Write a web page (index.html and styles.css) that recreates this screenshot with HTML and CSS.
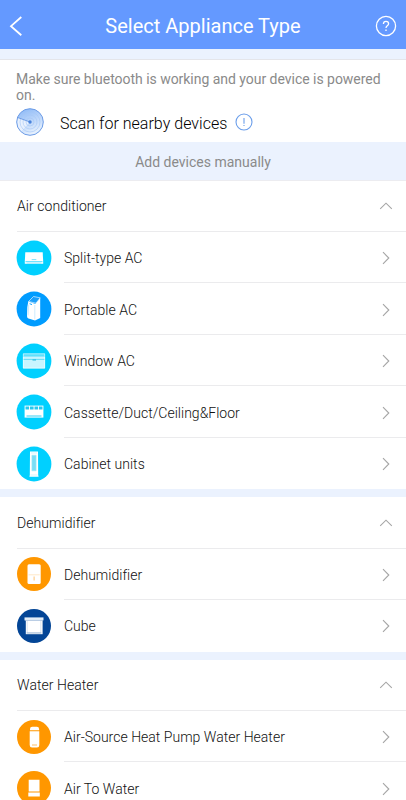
FILE: index.html
```html
<!DOCTYPE html>
<html lang="en">
<head>
  <meta charset="UTF-8" />
  <meta name="viewport" content="width=device-width, initial-scale=1" />
  <title>Select Appliance Type</title>
  <link rel="stylesheet" href="styles.css">
</head>
<body>

  <svg class="defs" width="0" height="0">
    <symbol id="up" viewBox="0 0 14 8"><path d="M1.2 6.8 7 1.2l5.8 5.6" /></symbol>
    <symbol id="right" viewBox="0 0 8 14"><path d="M1 1.2 6.8 7 1 12.8" /></symbol>
  </svg>

  <header class="topbar">
    <svg class="back" width="14" height="20" viewBox="0 0 14 20"><path d="M12.3 1 2 10.2 12.3 19.2" /></svg>
    <h1>Select Appliance Type</h1>
    <svg class="help" width="22" height="22" viewBox="0 0 22 22">
      <circle cx="11" cy="11" r="9.6" />
      <path d="M8.4 9c0-1.7 1.1-2.7 2.6-2.7s2.6 1 2.6 2.5c0 1.9-2.6 2.1-2.6 4.1M11 14.6v1.4" />
    </svg>
  </header>

  <section class="scan">
    <p class="hint">Make sure bluetooth is working and your device is powered on.</p>
    <div class="scan-row">
      <svg class="radar" width="28" height="28" viewBox="0 0 28 28">
        <defs>
          <linearGradient id="sweep" x1="0" y1="0" x2="0.4" y2="1">
            <stop offset="0" stop-color="#86b5f6" />
            <stop offset="1" stop-color="#e4effd" />
          </linearGradient>
        </defs>
        <circle cx="14" cy="14" r="13.2" fill="url(#sweep)" />
        <path d="M14 14 1.6 9.5A13.2 13.2 0 0 0 5 23.7z" fill="#e8f1fe" />
        <g fill="none" stroke="#a5c6f5" stroke-width=".6">
          <circle cx="14" cy="14" r="4" />
          <circle cx="14" cy="14" r="7" />
          <circle cx="14" cy="14" r="10" />
        </g>
        <circle cx="14" cy="14" r="13.3" fill="none" stroke="#6b9be6" />
        <path d="M14 14 1.6 9.5" stroke="#5c8fe0" stroke-width=".8" />
        <circle cx="14" cy="14" r="1.7" fill="#4a83dc" />
      </svg>
      <span class="scan-label">Scan for nearby devices</span>
      <svg class="info" width="18" height="18" viewBox="0 0 18 18">
        <circle cx="9" cy="9" r="8" />
        <path d="M9 5v5.8M9 11.9v1.2" />
      </svg>
    </div>
  </section>

  <div class="manual">Add devices manually</div>

  <section class="group">
    <div class="group-head"><h2>Air conditioner</h2><svg class="arrow" width="14" height="8"><use href="#up" /></svg></div>
    <div class="item">
      <svg class="icon" width="36" height="36" viewBox="0 0 36 36">
        <circle cx="18" cy="18" r="17.4" fill="#00d0ff" />
        <path d="M9.3 12.3h17.4l.5 9.4v2H8.800v-2z" fill="#fff" />
        <path d="M9.5 21.7h17" stroke="#00d0ff" stroke-width=".7" />
        <path d="M15.7 19.6h4.6" stroke="#5bdcf8" stroke-width=".8" />
        <path d="M11 23.2h14" stroke="#9beafb" stroke-width=".8" />
      </svg>
      <div class="item-body"><span>Split-type AC</span><svg class="arrow" width="8" height="14"><use href="#right" /></svg></div>
    </div>
    <div class="item">
      <svg class="icon" width="36" height="36" viewBox="0 0 36 36">
        <circle cx="18" cy="18" r="17.4" fill="#009cff" />
        <path d="m12.5 10.5 5-5 6.7 1.3-4.2 5.4z" fill="#1b9ffa" stroke="#fff" stroke-width=".6" />
        <path d="m12.3 10.6 7.1 2.5 4.8-6v19.8l-5.2 2.6-6.5-2.1q-1.5-.5-1.5-2.500l.3-9z" fill="#fff" />
        <path d="M18.8 14v14.5M12.7 13.5l-.6 11" fill="none" stroke="#addcfc" stroke-width=".6" />
        <path d="m13.6 12.7 2.4.9" stroke="#009cff" stroke-width=".9" />
      </svg>
      <div class="item-body"><span>Portable AC</span><svg class="arrow" width="8" height="14"><use href="#right" /></svg></div>
    </div>
    <div class="item">
      <svg class="icon" width="36" height="36" viewBox="0 0 36 36">
        <circle cx="18" cy="18" r="17.4" fill="#00d0ff" />
        <path d="M7 10.6h22v14.8H7z" fill="#c9f5ff" />
        <path d="M7.3 10.9h21.4v3H7.3z" fill="#5fe0fc" stroke="#c9f5ff" stroke-width=".6" />
        <path d="M7 16.4h22" stroke="#38d4f5" stroke-width=".7" />
        <path d="M16.5 17H20" stroke="#00a9d6" stroke-width=".8" />
        <path d="M7.3 14v11.1h21.4V14" fill="none" stroke="#fff" stroke-width=".6" />
      </svg>
      <div class="item-body"><span>Window AC</span><svg class="arrow" width="8" height="14"><use href="#right" /></svg></div>
    </div>
    <div class="item">
      <svg class="icon" width="36" height="36" viewBox="0 0 36 36">
        <circle cx="18" cy="18" r="17.4" fill="#00d0ff" />
        <path d="M8.6 11.6h18.8v12H8.6z" fill="#fff" />
        <path d="M9.5 12.6h3.6v2.8H9.5zM14 12.6h3.6v2.8H14zM18.5 12.6h3.6v2.8h-3.6zM23 12.6h3.5v2.8H23z" fill="#25c9ef" />
        <path d="M10.5 22h15" stroke="#00c4f2" stroke-width=".8" />
      </svg>
      <div class="item-body"><span>Cassette/Duct/Ceiling&amp;Floor</span><svg class="arrow" width="8" height="14"><use href="#right" /></svg></div>
    </div>
    <div class="item">
      <svg class="icon" width="36" height="36" viewBox="0 0 36 36">
        <circle cx="18" cy="18" r="17.4" fill="#00d0ff" />
        <path d="M14 5.6h8l.2 23.4.4 1.800h-9.200l.4-1.800z" fill="#fff" />
        <path d="M15.900 9.200h4.200v15.600h-4.200z" fill="#79def5" stroke="#a0e9f8" stroke-width=".6" />
        <path d="M15 7h6M14.5 29h7" stroke="#b5f0fc" stroke-width=".6" />
      </svg>
      <div class="item-body"><span>Cabinet units</span><svg class="arrow" width="8" height="14"><use href="#right" /></svg></div>
    </div>
  </section>

  <section class="group">
    <div class="group-head"><h2>Dehumidifier</h2><svg class="arrow" width="14" height="8"><use href="#up" /></svg></div>
    <div class="item">
      <svg class="icon" width="36" height="36" viewBox="0 0 36 36">
        <circle cx="18" cy="18" r="17" fill="#ff9700" />
        <rect x="11.5" y="8.2" width="13.2" height="19.8" rx="1.5" fill="#fff" />
        <path d="M12.5 18.8h11.2" stroke="#ffdfb0" stroke-width=".7" />
        <path d="M18.1 20.5v4" stroke="#ffc477" stroke-width="1" />
      </svg>
      <div class="item-body"><span>Dehumidifier</span><svg class="arrow" width="8" height="14"><use href="#right" /></svg></div>
    </div>
    <div class="item">
      <svg class="icon" width="36" height="36" viewBox="0 0 36 36">
        <circle cx="18" cy="18" r="17" fill="#034596" />
        <path d="M8.5 9.4h19v3h-19z" fill="#e4eef8" />
        <path d="M9.8 12.4h16.8v13.800H9.800z" fill="#fff" />
        <path d="M9 12.300h18M11.200 12.500v12.300h13.600V12.500" fill="none" stroke="#b5cbe3" stroke-width=".5" />
        <path d="M10.500 25h15" stroke="#7499c4" stroke-width=".6" />
      </svg>
      <div class="item-body"><span>Cube</span><svg class="arrow" width="8" height="14"><use href="#right" /></svg></div>
    </div>
  </section>

  <section class="group">
    <div class="group-head"><h2>Water Heater</h2><svg class="arrow" width="14" height="8"><use href="#up" /></svg></div>
    <div class="item">
      <svg class="icon" width="36" height="36" viewBox="0 0 36 36">
        <circle cx="18" cy="18" r="17" fill="#ff9700" />
        <path d="M14 11.3V10q0-2.300 2.300-2.300h4.500q2.300 0 2.300 2.300v1.300z" fill="#fff" />
        <path d="M13.700 12.300h9.600V26q0 2.500-2.300 2.500h-5q-2.300 0-2.300-2.500z" fill="#fff" />
        <path d="M16 26h5" stroke="#ffae3c" stroke-width=".8" />
      </svg>
      <div class="item-body"><span>Air-Source Heat Pump Water Heater</span><svg class="arrow" width="8" height="14"><use href="#right" /></svg></div>
    </div>
    <div class="item">
      <svg class="icon" width="36" height="36" viewBox="0 0 36 36">
        <circle cx="18" cy="18" r="17" fill="#ff9700" />
        <path d="M12.700 9.800h10.800v11.600H12.700zM12.300 22.600h11.500v4H12.300z" fill="#fff" />
      </svg>
      <div class="item-body"><span>Air To Water</span><svg class="arrow" width="8" height="14"><use href="#right" /></svg></div>
    </div>
  </section>

</body>
</html>
```
FILE: styles.css
```css
:root {
  --blue: #6499ff;
  --band: #ebf2fe;
  --line: #ebebed;
}
* {
  box-sizing: border-box;
}
body {
  margin: 0;
  height: 800px;
  overflow: hidden;
  background: white;
  font-family: Roboto, "Liberation Sans", sans-serif;
  font-weight: 300;
  color: #111;
}
h1, h2, p {
  margin: 0;
  font-weight: inherit;
}
svg {
  display: block;
  flex: none;
}
.defs {
  display: none;
}
.topbar {
  display: flex;
  align-items: center;
  height: 49px;
  padding: 2px 9px 0;
  background: var(--blue);
  color: white;
}
.topbar h1 {
  flex: 1;
  padding-left: 8px;
  text-align: center;
  font-size: 20px;
  font-weight: 400;
}
.back, .help {
  fill: none;
  stroke: white;
  stroke-width: 1.8;
}
.help {
  stroke-width: 1.3;
}
.scan {
  height: 93px;
  border-top: 10px solid var(--band);
  padding: 12px 16px 0;
  box-shadow: inset 0 1px #e4e5ea;
}
.hint {
  font-size: 14px;
  font-weight: 400;
  line-height: 16px;
  letter-spacing: -0.03px;
  color: #8a8a8a;
}
.scan-row {
  display: flex;
  align-items: center;
  height: 28px;
  margin-top: 5px;
}
.scan-label {
  margin: 2px 8px 0 16px;
  font-size: 16px;
  letter-spacing: 0.02px;
  color: black;
}
.info {
  fill: none;
  stroke: #6b9eea;
  stroke-width: 1.1;
}
.manual {
  height: 38.5px;
  border-bottom: 1px solid #ececf0;
  background: var(--band);
  text-align: center;
  line-height: 40px;
  font-size: 14px;
  font-weight: 400;
  color: #8a8a8a;
}
.group + .group {
  border-top: 8px solid var(--band);
}
.group-head {
  display: flex;
  align-items: center;
  justify-content: space-between;
  height: 51.3px;
  margin-left: 17px;
  padding: 1px 13px 0 0;
  border-bottom: 1px solid var(--line);
}
.group-head h2 {
  font-size: 14px;
  letter-spacing: 0.05px;
}
.item {
  display: flex;
  align-items: center;
  height: 51.5px;
  padding-left: 16px;
}
.item-body {
  display: flex;
  flex: 1;
  align-items: center;
  justify-content: space-between;
  height: 100%;
  margin-left: 12px;
  padding: 2px 16px 0 0;
  border-bottom: 1px solid var(--line);
  font-size: 14px;
  letter-spacing: 0.02px;
}
.item:last-child .item-body {
  border-bottom-color: transparent;
}
.arrow {
  fill: none;
  stroke: #a5a5a5;
  stroke-width: 1.1;
}
```
